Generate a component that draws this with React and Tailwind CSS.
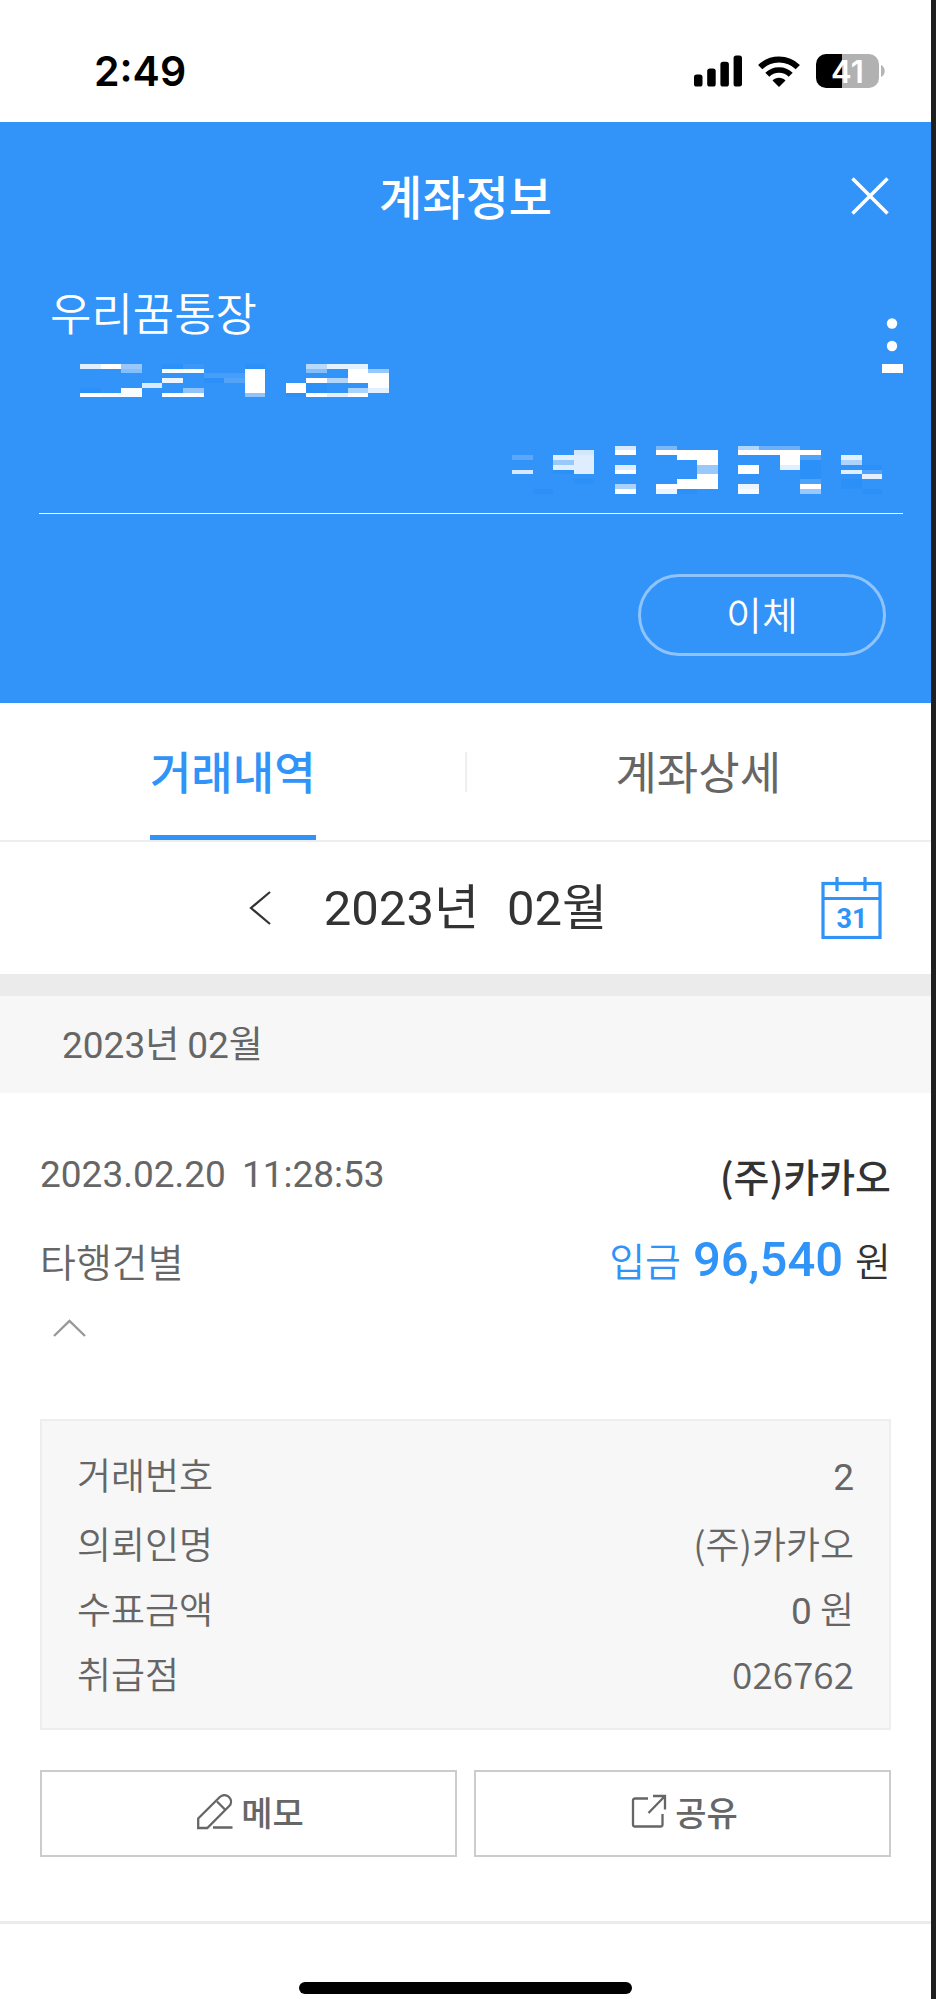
const KR = "font-['Noto_Sans_CJK_KR',sans-serif]";

function SignalIcon() {
  return (
    <svg width="48" height="32" viewBox="0 0 48 32" aria-hidden="true">
      <rect x="0" y="19.5" width="8.5" height="12" rx="2.6" />
      <rect x="13.2" y="13.5" width="8.5" height="18" rx="2.6" />
      <rect x="26.4" y="6.8" width="8.5" height="24.7" rx="2.6" />
      <rect x="39.6" y="0.5" width="8.5" height="31" rx="2.6" />
    </svg>
  );
}

function WifiIcon() {
  return (
    <svg width="42" height="31" viewBox="0 0 42 31" fill="none" stroke="#000" strokeWidth="6" aria-hidden="true">
      <path d="M2.2 11.2C12.5 1 29.5 1 39.8 11.2" />
      <path d="M9.3 18.7C15.5 12.4 26.5 12.4 32.7 18.7" strokeWidth="5.6" />
      <path d="M14.5 24.5C18 20.8 24 20.8 27.5 24.5L21 31Z" fill="#000" stroke="none" />
    </svg>
  );
}

function Battery() {
  return (
    <div className="flex items-center gap-[2px]" role="img" aria-label="41%">
      <div className="flex h-[34px] w-[63px] items-center justify-center rounded-[10px] bg-[linear-gradient(to_right,#000_42%,#b1b1b1_42%)] font-['Inter',sans-serif] text-[31px] leading-none font-semibold text-white">
        41
      </div>
      <svg width="4" height="12" viewBox="0 0 4 12" aria-hidden="true">
        <path d="M0 0C5 2 5 10 0 12Z" fill="#b5b5b5" />
      </svg>
    </div>
  );
}

/* Censored digits: [x, y, width, height, opacity] */
const ACCOUNT_BLOCKS = [
  [240, 282, 63, 15, 0.85], [303, 282, 60, 15, 1], [363, 282, 63, 15, 0.5],
  [363, 297, 63, 12, 0.4], [240, 369, 63, 12, 1], [303, 369, 60, 12, 0.97],
  [363, 354, 63, 27, 0.97], [426, 339, 60, 15, 0.82], [486, 297, 126, 12, 0.97],
  [549, 282, 63, 15, 0.05], [486, 324, 63, 15, 0.9], [549, 354, 63, 15, 0.45],
  [486, 369, 126, 12, 1], [612, 309, 123, 15, 0.1], [672, 324, 63, 15, 0.16],
  [735, 297, 60, 72, 1], [735, 369, 60, 12, 0.45], [858, 339, 60, 30, 1],
  [918, 282, 63, 15, 0.65], [981, 282, 123, 15, 0.87], [918, 297, 63, 12, 0.4],
  [918, 324, 63, 15, 1], [981, 324, 63, 15, 0.62], [1044, 297, 60, 42, 1],
  [1104, 297, 63, 12, 0.5], [1104, 309, 63, 45, 1], [1044, 354, 60, 15, 0.58],
  [1104, 354, 63, 15, 0.86], [918, 369, 63, 12, 1], [981, 369, 63, 12, 0.86],
  [1044, 369, 60, 12, 1],
];

const ACCOUNT_SHADES = [
  [240, 354, 63, 15], [486, 282, 63, 15], [612, 324, 60, 15],
  [918, 339, 63, 30], [858, 369, 60, 12], [735, 282, 60, 15],
];

const BALANCE_BLOCKS = [
  [126, 495, 63, 15, 0.2], [126, 540, 63, 12, 0.8], [249, 495, 63, 15, 0.85],
  [249, 510, 63, 15, 0.5], [249, 525, 63, 15, 0.85], [312, 480, 60, 15, 0.78],
  [312, 495, 60, 57, 0.84], [435, 468, 63, 12, 0.8], [435, 480, 63, 15, 1],
  [435, 525, 63, 15, 0.84], [435, 540, 63, 12, 1], [435, 582, 63, 15, 0.58],
  [435, 597, 63, 15, 1], [558, 468, 63, 12, 0.35], [558, 480, 186, 15, 1],
  [621, 495, 123, 15, 1], [681, 510, 63, 15, 1], [681, 525, 63, 27, 0.5],
  [681, 552, 63, 15, 1], [621, 567, 123, 15, 1], [558, 582, 186, 15, 1],
  [558, 597, 63, 15, 0.9], [804, 468, 63, 12, 0.62], [867, 468, 123, 12, 0.28],
  [804, 480, 249, 15, 1], [930, 495, 60, 30, 1], [930, 525, 60, 15, 0.86],
  [990, 495, 63, 15, 0.16], [804, 525, 63, 27, 1], [804, 582, 63, 15, 0.9],
  [804, 597, 63, 15, 0.96], [990, 567, 63, 15, 0.14], [990, 582, 63, 15, 1],
  [990, 597, 63, 15, 0.5], [1113, 495, 63, 15, 0.86], [1113, 510, 63, 15, 0.6],
  [1113, 540, 63, 12, 0.86], [1176, 540, 60, 12, 0.14], [1176, 552, 60, 15, 0.86],
];

const BALANCE_SHADES = [
  [189, 597, 60, 15], [249, 540, 63, 12], [312, 567, 60, 15], [990, 510, 63, 57],
  [621, 597, 60, 15], [1176, 525, 60, 15], [1113, 567, 63, 30], [1176, 597, 60, 15],
];

function Mosaic({ blocks, shades, viewBox, width, height, label }) {
  return (
    <svg width={width} height={height} viewBox={viewBox} shapeRendering="crispEdges" role="img" aria-label={label}>
      {shades.map(([x, y, w, h]) => (
        <rect key={`s${x}-${y}`} x={x} y={y} width={w} height={h} fill="#2b90f7" />
      ))}
      {blocks.map(([x, y, w, h, o]) => (
        <rect key={`${x}-${y}`} x={x} y={y} width={w} height={h} fill="#fff" fillOpacity={o} />
      ))}
    </svg>
  );
}

function CalendarIcon() {
  return (
    <svg width="61" height="62" viewBox="0 0 61 62" fill="none" stroke="#2f93f8" strokeWidth="3.2" aria-hidden="true">
      <rect x="2" y="6.5" width="57" height="54" />
      <path d="M2 21.5H59M16 0V14M44 0V14" />
      <text x="31" y="51" textAnchor="middle" fill="#2f93f8" stroke="none" className="font-['Roboto',sans-serif] text-[27px] font-bold">
        31
      </text>
    </svg>
  );
}

function MemoIcon() {
  return (
    <svg width="36" height="36" viewBox="0 0 36 36" fill="none" stroke="#666" strokeWidth="2.3" aria-hidden="true">
      <path d="M1.2 34V24.5L22.8 3C25.5 .5 29.5 .5 32 3C34.7 5.8 34.7 9.5 32 12.3L10.3 34Z" />
      <path d="M20 7.5L28.5 16M16 33.5H35.5" />
    </svg>
  );
}

function ShareIcon() {
  return (
    <svg width="36" height="36" viewBox="0 0 36 36" fill="none" stroke="#666" strokeWidth="2.3" aria-hidden="true">
      <path d="M17 4.5H4Q2 4.5 2 6.5V30.5Q2 32.5 4 32.5H29.5Q31.5 32.5 31.5 30.5V20" />
      <path d="M22 2H34V15.5M34 2L17.5 19" />
    </svg>
  );
}

function Num({ children }) {
  return <span className="font-['Roboto',sans-serif] font-normal">{children}</span>;
}

const DETAILS = [
  { label: "거래번호", value: <Num>2</Num> },
  { label: "의뢰인명", value: "(주)카카오" },
  { label: "수표금액", value: <><Num>0</Num> 원</> },
  { label: "취급점", value: "026762" },
];

export default function App() {
  return (
    <div className={`${KR} flex min-h-screen flex-col border-r-[5px] border-[#1f1f1f] bg-white text-[#666]`}>
      <div className="flex h-[122px] items-center justify-between pt-5 pr-[46px] pl-[94px]">
        <time className="font-['Inter',sans-serif] text-[41px] leading-none font-semibold text-black">2:49</time>
        <div className="flex items-center gap-4">
          <SignalIcon />
          <WifiIcon />
          <Battery />
        </div>
      </div>

      <header className="flex flex-col bg-[#3293f8] pb-[47px] text-white">
        <div className="grid h-[148px] grid-cols-[1fr_auto_1fr] items-center px-[42px]">
          <h1 className="col-start-2 mb-1 text-[47px] leading-none font-medium">계좌정보</h1>
          <button type="button" aria-label="닫기" className="justify-self-end">
            <svg width="38" height="38" viewBox="0 0 38 38" stroke="#fff" strokeWidth="3.5" aria-hidden="true">
              <path d="M1.5 1.5L36.5 36.5M36.5 1.5L1.5 36.5" />
            </svg>
          </button>
        </div>

        <div className="mr-[28px] ml-[39px] flex h-[244px] flex-col border-b border-white">
          <div className="flex justify-between">
            <div className="flex flex-col">
              <h2 className="mt-3 ml-[11px] text-[45px] leading-[60px] font-[350]">우리꿈통장</h2>
              <div className="mt-[22px] ml-[41px]">
                <Mosaic blocks={ACCOUNT_BLOCKS} shades={ACCOUNT_SHADES} viewBox="240 282 990 99" width={330} height={33} label="계좌번호" />
              </div>
            </div>
            <button type="button" aria-label="더보기" className="mt-12 self-start">
              <svg width="21" height="56" viewBox="0 0 21 56" fill="#fff" aria-hidden="true">
                <circle cx="10" cy="5.5" r="5.2" />
                <circle cx="10" cy="28" r="5.2" />
                <rect x="0" y="46" width="21" height="9" />
              </svg>
            </button>
          </div>
          <div className="mt-auto mr-5 mb-[19px] self-end">
            <Mosaic blocks={BALANCE_BLOCKS} shades={BALANCE_SHADES} viewBox="126 468 1113 144" width={371} height={48} label="잔액" />
          </div>
        </div>

        <button type="button" className="mt-[60px] mr-[45px] h-[82px] w-[248px] self-end rounded-full border-[3px] border-white/45 pb-[3px] text-[39px] leading-none font-[350]">
          이체
        </button>
      </header>

      <nav className="relative grid h-[139px] grid-cols-2 border-b-2 border-[#eee] text-[45px]">
        <div className="flex justify-center">
          <button type="button" aria-current="page" className="border-b-[5px] border-[#2f93f8] pt-1 font-medium text-[#2f93f8]">거래내역</button>
        </div>
        <div className="flex justify-center">
          <button type="button" className="border-b-[5px] border-transparent pt-1">계좌상세</button>
        </div>
        <span className="absolute top-[49px] left-1/2 -ml-px h-10 w-[2px] bg-[#eee]" />
      </nav>

      <div className="grid h-[132px] grid-cols-[1fr_auto_1fr] items-center px-[49px] text-[#333]">
        <button type="button" aria-label="이전 달" className="mr-[53px] justify-self-end">
          <svg width="22" height="34" viewBox="0 0 22 34" fill="none" stroke="#333" strokeWidth="2.2" aria-hidden="true">
            <path d="M21 1L2 17L21 33" />
          </svg>
        </button>
        <h2 className="flex gap-7 font-['Roboto','Noto_Sans_CJK_KR',sans-serif] text-[49px] leading-none">
          <span>2023년</span>
          <span>02월</span>
        </h2>
        <button type="button" aria-label="날짜 선택" className="justify-self-end">
          <CalendarIcon />
        </button>
      </div>

      <h3 className="flex h-[119px] items-center gap-2 border-t-[22px] border-[#ebebeb] bg-[#f7f7f7] pt-[2px] pl-[62px] font-['Roboto','Noto_Sans_CJK_KR',sans-serif] text-[37px] leading-none">
        <span>2023년</span>
        <span>02월</span>
      </h3>

      <section className="flex flex-col border-b-[3px] border-[#ebebeb] px-10 pt-[50px] pb-16">
        <div className="flex h-16 items-center justify-between leading-[64px]">
          <time className="flex gap-4 font-['Roboto',sans-serif] text-[37px]">
            <span>2023.02.20</span>
            <span>11:28:53</span>
          </time>
          <strong className="text-[39px] font-medium text-[#333]">(주)카카오</strong>
        </div>
        <div className="mt-5 flex items-center justify-between leading-[64px]">
          <span className="text-[39px] font-[350]">타행건별</span>
          <span className="flex items-baseline text-[39px] font-[350] text-[#333]">
            <span className="mr-3 text-[#2f93f8]">입금</span>
            <strong className="mr-3 font-['Roboto',sans-serif] text-[49px] font-medium text-[#2f93f8]">96,540</strong>
            원
          </span>
        </div>
        <button type="button" aria-label="접기" className="mt-[27px] ml-[13px] self-start">
          <svg width="33" height="18" viewBox="0 0 33 18" fill="none" stroke="#999" strokeWidth="2.4" aria-hidden="true">
            <path d="M1 17L16.5 2L32 17" />
          </svg>
        </button>

        <dl className="mt-[82px] flex flex-col border-2 border-[#eee] bg-[#f7f7f7] px-[35px] pt-[20px] pb-[23px] text-[37px] leading-[66px] font-[350]">
          {DETAILS.map(({ label, value }) => (
            <div key={label} className="flex h-[65px] items-baseline justify-between first:h-[69px]">
              <dt>{label}</dt>
              <dd>{value}</dd>
            </div>
          ))}
        </dl>

        <div className="mt-10 grid grid-cols-2 gap-[17px] text-[34px] leading-none font-medium">
          <button type="button" className="flex h-[87px] items-center justify-center gap-2 border-2 border-[#ccc] pb-1 pl-1">
            <MemoIcon />
            메모
          </button>
          <button type="button" className="flex h-[87px] items-center justify-center gap-2 border-2 border-[#ccc] pb-1 pl-1">
            <ShareIcon />
            공유
          </button>
        </div>
      </section>

      <div className="mt-auto mb-[5px] h-3 w-[333px] self-center rounded-full bg-black" />
    </div>
  );
}
